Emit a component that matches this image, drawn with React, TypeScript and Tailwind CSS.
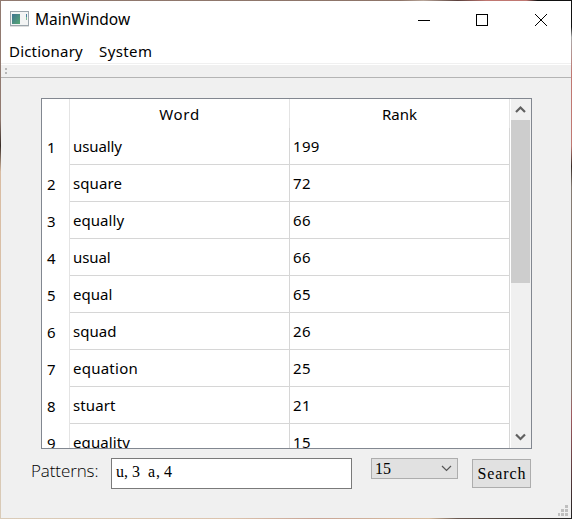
import React from "react";

const rows: [string, string, string][] = [
  ["usually", "199", "tracking-[-0.1px]"],
  ["square", "72", "tracking-[0.1px]"],
  ["equally", "66", "tracking-[0.05px]"],
  ["usual", "66", "tracking-[-0.1px]"],
  ["equal", "65", "tracking-[0.05px]"],
  ["squad", "26", "tracking-[0.05px]"],
  ["equation", "25", "tracking-[0.25px]"],
  ["stuart", "21", "tracking-[0.1px]"],
  ["equality", "15", "tracking-[0.1px]"],
];

function AppIcon() {
  return (
    <svg width="20" height="17" viewBox="0 0 20 17" shapeRendering="crispEdges">
      <defs>
        <linearGradient id="pane" x1="0" y1="0" x2="1" y2="1">
          <stop offset="0" stopColor="#3f7391" />
          <stop offset="1" stopColor="#56a873" />
        </linearGradient>
      </defs>
      <rect x="0.5" y="0.5" width="18" height="14" fill="#f3f4f4" stroke="#9ba5ac" />
      <rect x="0" y="15" width="19" height="1" fill="#dedede" />
      <rect x="2" y="3" width="8" height="10" fill="url(#pane)" />
      <rect x="16" y="3" width="1" height="3" fill="#4b81a0" />
      <rect x="16" y="6" width="1" height="3" fill="#7dbb94" />
    </svg>
  );
}

function TitleBar() {
  return (
    <div className="flex h-[37px] shrink-0 items-center bg-white pl-[9px]">
      <AppIcon />
      <span className="-mt-px ml-[5px] flex-1 text-[15.5px] leading-[20px]">MainWindow</span>
      <svg width="132" height="14" viewBox="0 0 132 14" fill="none" stroke="#000" className="mr-[22px]">
        <path d="M1 7.5h12" shapeRendering="crispEdges" />
        <rect x="59.5" y="1.5" width="11" height="11" shapeRendering="crispEdges" />
        <path d="M118 1l12 12M130 1l-12 12" strokeWidth="1" />
      </svg>
    </div>
  );
}

function Table() {
  return (
    <div className="flex h-[351px] w-[491px] border border-[#828790] bg-white">
      <div className="flex w-[468px] flex-col overflow-hidden">
        <div className="flex h-[29px] shrink-0 text-center leading-[31px]">
          <div className="w-[28px] border-r border-[#e4e4e4]" />
          <div className="w-[220px] border-r border-[#e4e4e4] tracking-[0.7px]">Word</div>
          <div className="w-[220px] border-r border-[#e4e4e4]">Rank</div>
        </div>
        {rows.map(([word, rank, tracking], i) => (
          <div key={word} className="flex h-[37px] shrink-0 leading-[36px]">
            <div className="w-[28px] border-r border-[#e4e4e4] pl-[5px] leading-[38px]">{i + 1}</div>
            <div className={`w-[220px] border-r border-b border-[#d6d6d6] pl-[3px] ${tracking}`}>{word}</div>
            <div className="w-[220px] border-r border-b border-[#d6d6d6] pl-[3px] tracking-[0.3px]">{rank}</div>
          </div>
        ))}
      </div>
      <div className="ml-px flex w-[20px] flex-col bg-[#f0f0f0]">
        <svg width="20" height="21" fill="none" stroke="#606060" strokeWidth="2.2">
          <path d="M5 13l4.5-4.5L14 13" />
        </svg>
        <div className="h-[163px] w-[19px] bg-[#cdcdcd]" />
        <svg width="20" height="21" fill="none" stroke="#606060" strokeWidth="2.2" className="mt-auto">
          <path d="M5 7.5L9.5 12L14 7.5" />
        </svg>
      </div>
    </div>
  );
}

export default function App() {
  return (
    <div className="h-[519px] w-[572px] bg-[linear-gradient(to_right,#d9cbb8_0%,#dcc3ad_40%,#c8a596_55%,#d8bda0_75%,#6a5a52_80%,#222_100%)] font-['Noto_Sans','Open_Sans',sans-serif] text-[15px] text-black">
      <div className="flex h-[519px] bg-[linear-gradient(to_right,#917a70_0%,#8d7468_70%,#b9a79b_74%,#5a403c_80%,#c07872_85%,#c07872_92%,#111_94%,#111_100%)] bg-[length:100%_1px] bg-no-repeat pt-px pb-px">
        <div className="w-px bg-[linear-gradient(#917a70_0%,#917a70_23%,#382c27_28%,#d9bca2_33%,#d9cbb8_100%)]" />
        <div className="flex w-[570px] flex-col bg-[#f0f0f0]">
          <TitleBar />
          <div className="flex h-[25px] shrink-0 bg-white pl-[8px] leading-[27px]">
            <span className="w-[90px] tracking-[0.2px]">Dictionary</span>
            <span className="tracking-[0.4px]">System</span>
          </div>
          <div className="h-[2px] shrink-0 border-t border-[#f0f0f0] bg-white" />
          <div className="flex h-[13px] shrink-0 flex-col gap-[2px] border-b border-[#b4b4b4] pt-[3px] pl-[4px]">
            <div className="size-[2px] bg-[#b8b8b8]" />
            <div className="size-[2px] bg-[#b8b8b8]" />
          </div>
          <div className="pt-[20px] pl-[40px]">
            <Table />
          </div>
          <div className="flex h-[56px] items-start pt-[9px] pl-[30px] font-['Liberation_Serif',serif] text-[16px] leading-[20px]">
            <span className="w-[80px] pt-[3px] font-['Open_Sans','Noto_Sans',sans-serif] text-[17px] font-light tracking-[-0.1px]">
              Patterns:
            </span>
            <div className="h-[31px] w-[241px] border border-[#7a7a7a] bg-white pt-[3px] pl-[4px] whitespace-pre">
              u<span className="tracking-[4px]">,</span>3<span className="tracking-[4px]"> </span>
              <span className="tracking-[0.9px]">a</span>
              <span className="tracking-[4px]">,</span>4
            </div>
            <div className="ml-[19px] flex h-[21px] w-[87px] items-center justify-between border border-[#adadad] bg-[#e1e1e1] pr-[5px] pl-[3px]">
              <span>15</span>
              <svg width="11" height="7" fill="none" stroke="#555" strokeWidth="1.2">
                <path d="M1 1l4.5 4.5L10 1" />
              </svg>
            </div>
            <button className="mt-px ml-[14px] h-[29px] w-[59px] border border-[#adadad] bg-[#e1e1e1] pl-px tracking-[0.9px]">
              Search
            </button>
          </div>
          <div className="mt-auto flex justify-end pr-[3px] pb-[2px]">
            <svg width="10" height="11" fill="#bfbfbf" shapeRendering="crispEdges">
              <path d="M7 0h3v3h-3zM3 4h3v3h-3zM7 4h3v3h-3zM0 8h2v3h-2zM3 8h3v3h-3zM7 8h3v3h-3z" />
            </svg>
          </div>
        </div>
        <div className="w-px bg-[linear-gradient(#111_0%,#111_5%,#aaa_7%,#c07872_14%,#c07872_28%,#382c27_32%,#857b73_36%,#857b73_75%,#a05a60_80%,#222_100%)]" />
      </div>
    </div>
  );
}
